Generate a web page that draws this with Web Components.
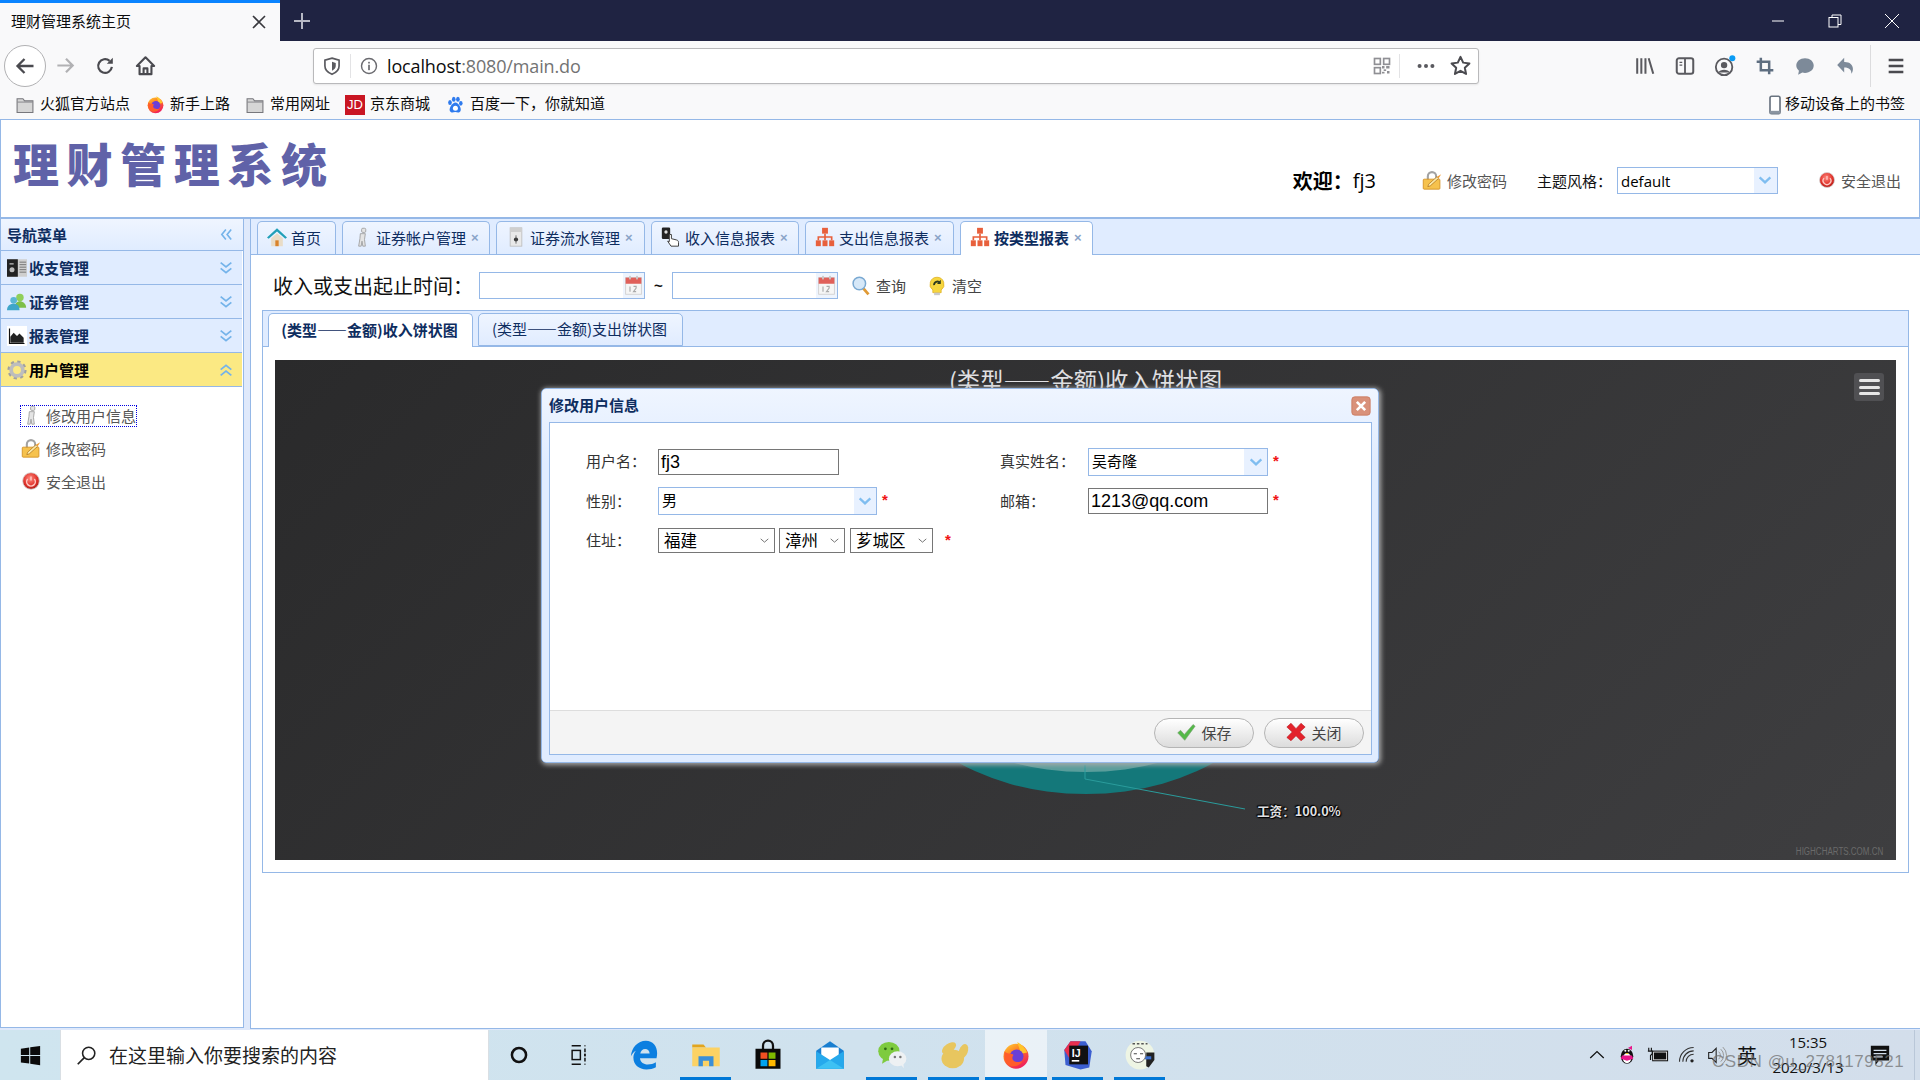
<!DOCTYPE html>
<html lang="zh">
<head>
<meta charset="utf-8">
<title>理财管理系统主页</title>
<style>
  html, body { margin: 0; padding: 0; }
  body {
    width: 1920px; height: 1080px; overflow: hidden; position: relative;
    display: flex; flex-direction: column; background: #fff;
    font-family: "Noto Sans CJK SC", "Noto Sans", sans-serif; font-size: 15px;
  }
</style>
</head>
<body>
<browser-chrome></browser-chrome>
<app-header></app-header>
<app-body>
  <side-menu>
    <menu-row icon="server">收支管理</menu-row>
    <menu-row icon="users">证券管理</menu-row>
    <menu-row icon="area">报表管理</menu-row>
    <menu-row icon="gear" open>用户管理</menu-row>
    <menu-links>
      <menu-link icon="man" focused>修改用户信息</menu-link>
      <menu-link icon="lock">修改密码</menu-link>
      <menu-link icon="power">安全退出</menu-link>
    </menu-links>
  </side-menu>
  <main-area>
    <top-tabs>
      <tab-item icon="house" w="79" plain>首页</tab-item>
      <tab-item icon="man" w="148">证券帐户管理</tab-item>
      <tab-item icon="ticket" w="149">证券流水管理</tab-item>
      <tab-item icon="hand" w="148">收入信息报表</tab-item>
      <tab-item icon="org" w="149">支出信息报表</tab-item>
      <tab-item icon="org" w="133" active>按类型报表</tab-item>
    </top-tabs>
    <filter-bar></filter-bar>
    <report-panel></report-panel>
  </main-area>
</app-body>
<user-dialog></user-dialog>
<task-bar></task-bar>

<script>
const UI_FONT = `"Noto Sans CJK SC", "Noto Sans", sans-serif`;

// all icons share a 24x24 box, drawn by hand to follow the reference
const ICONS = {
  back: `<path d="M20.5 12H5M11.5 5l-7 7 7 7" fill="none" stroke="#4a4a4f" stroke-width="2.3"/>`,
  forward: `<path d="M3.5 12H19M12.5 5l7 7-7 7" fill="none" stroke="#b1b1b3" stroke-width="2.3"/>`,
  reload: `<path d="M19.5 13a7.5 7.5 0 1 1-2.5-6.6" fill="none" stroke="#4a4a4f" stroke-width="2.4"/><path d="M20.5 3v6.5H14z" fill="#4a4a4f"/>`,
  home: `<path d="M12 3.5L3 12.5h2.8V21h12.4v-8.5H21zM10 21v-6h4v6" fill="none" stroke="#4a4a4f" stroke-width="2.2" stroke-linejoin="round"/>`,
  shield: `<path d="M12 2.5l8.5 2.5v7c0 5-3.6 8-8.5 10-4.9-2-8.5-5-8.5-10V5z" fill="none" stroke="#5a5a5f" stroke-width="2"/><path d="M12 7l4.5 1.3V12c0 2.6-1.9 4.4-4.5 5.6z" fill="#5a5a5f"/>`,
  info: `<circle cx="12" cy="12" r="9" fill="none" stroke="#6a6a6f" stroke-width="1.7"/><rect x="11" y="10.5" width="2" height="6.5" fill="#6a6a6f"/><rect x="11" y="7" width="2" height="2" fill="#6a6a6f"/>`,
  qr: `<g fill="none" stroke="#8f8f94" stroke-width="2"><rect x="3" y="3" width="7" height="7"/><rect x="14" y="3" width="7" height="7"/><rect x="3" y="14" width="7" height="7"/></g><g fill="#8f8f94"><rect x="12" y="12" width="3" height="3"/><rect x="17" y="12" width="4" height="3"/><rect x="14" y="16" width="3" height="2"/><rect x="18" y="18" width="3" height="3"/><rect x="12" y="19" width="3" height="2"/></g>`,
  dots: `<g fill="#5a5a5f"><circle cx="5" cy="12" r="2.2"/><circle cx="12" cy="12" r="2.2"/><circle cx="19" cy="12" r="2.2"/></g>`,
  star: `<path d="M12 3l2.8 6 6.5.8-4.8 4.5 1.3 6.5L12 17.5l-5.8 3.3 1.3-6.5-4.800-4.500 6.500-.8z" fill="none" stroke="#4a4a4f" stroke-width="2.1" stroke-linejoin="round"/>`,
  library: `<g stroke="#5a5a5f" stroke-width="2.2"><path d="M3.5 3.5v17M8 3.5v17M12.5 3.5v17M16 3.5l5 17"/></g>`,
  sidebar: `<rect x="3" y="3.5" width="18" height="17" rx="2.5" fill="none" stroke="#5a5a5f" stroke-width="2.2"/><path d="M12 3.5v17" stroke="#5a5a5f" stroke-width="2"/><path d="M6 8h3M6 11h3" stroke="#5a5a5f" stroke-width="1.5"/>`,
  account: `<circle cx="11" cy="13" r="9" fill="none" stroke="#5a5a5f" stroke-width="2"/><circle cx="11" cy="11" r="3.5" fill="#5a5a5f"/><path d="M5 19c1-4 11-4 12 0z" fill="#5a5a5f"/><circle cx="20" cy="3.500" r="3.300" fill="#0a9cf5"/>`,
  crop: `<path d="M7 2v15h15M2 7h15v15" fill="none" stroke="#5e6e80" stroke-width="3"/>`,
  chat: `<path d="M12 3.5c5.500 0 9.500 3.500 9.500 8s-4 8-9.500 8c-1 0-2-.1-2.900-.4L4.500 21.500l.9-4.400C3.600 15.700 2.500 13.700 2.500 11.500c0-4.500 4-8 9.500-8z" fill="#7d8a99"/>`,
  undo: `<path d="M10.5 3v5c6-.3 10 3 10 8 0 2-.6 4-1.800 5.500.3-4.500-2.700-7.300-8.200-7.200V20L2.500 11.500z" fill="#7d8a99"/>`,
  menu: `<path d="M4 5.5h16M4 12h16M4 18.500h16" stroke="#4a4a4f" stroke-width="2.6"/>`,
  folder: `<path d="M2.5 4.5h7l2 2.500h10v14h-19z" fill="#d6d6d6" stroke="#77777c" stroke-width="1.3"/><path d="M2.5 8.5h19" stroke="#8d8d92" stroke-width="1.3"/>`,
  firefox: `<defs><linearGradient id="ff" x1="0" y1="0" x2="0.6" y2="1"><stop offset="0" stop-color="#ffd63a"/><stop offset=".45" stop-color="#ff7a1f"/><stop offset="1" stop-color="#f01f5c"/></linearGradient></defs><circle cx="12" cy="13" r="10" fill="url(#ff)"/><path d="M13 1.5c3.500 2 6.500 4.500 8 8.500l-5 1z" fill="#ffc52b"/><circle cx="12.5" cy="13" r="5.5" fill="#6a3fd6"/><path d="M3 9c2 3 6 1 7 3-3 4 2 7 7 5-2 4-8 5-11 3S2 13 3 9z" fill="#ff5c2b"/>`,
  paw: `<g fill="#2f7bee"><ellipse cx="6" cy="9" rx="2.2" ry="3"/><ellipse cx="10.5" cy="5" rx="2.2" ry="3"/><ellipse cx="15.5" cy="5" rx="2.2" ry="3"/><ellipse cx="19" cy="10" rx="2.1" ry="2.8"/><path d="M12.5 9c3.500 0 8 7 6 10.500-1.500 2.500-4.500 1-6 1s-5 1.500-6.500-1C4 16 9 9 12.500 9z"/></g><circle cx="12.5" cy="16" r="3" fill="#fff"/>`,
  mobile: `<rect x="6" y="1.5" width="12" height="21" rx="2" fill="#fff" stroke="#6a7480" stroke-width="2"/><rect x="6" y="19" width="12" height="3.5" fill="#8b95a1"/>`,
  lock: `<path d="M7 12V7.5a5 5 0 0 1 10 0V12" fill="none" stroke="#a3a3a3" stroke-width="2.5"/><rect x="1.5" y="11" width="20" height="12" rx="1" fill="#f6c24d" stroke="#d18e1f"/><path d="M7 20l3-1 10-9-2-2-10 9z" fill="#fbe9a8" stroke="#a76b13" stroke-width=".8"/><path d="M18 8l5-3-3 5z" fill="#f29a2e"/>`,
  power: `<defs><radialGradient id="pw" cx=".45" cy=".35" r=".7"><stop offset="0" stop-color="#ff8a80"/><stop offset=".6" stop-color="#e0332b"/><stop offset="1" stop-color="#a81a16"/></radialGradient></defs><circle cx="12" cy="12" r="10" fill="url(#pw)" stroke="#d5d5d5"/><path d="M8 9.5a5.2 5.2 0 1 0 8 0" fill="none" stroke="#ffc7c2" stroke-width="1.8"/><path d="M12 6.5v5" stroke="#ffc7c2" stroke-width="1.8"/>`,
  man: `<g fill="#e4e4e4" stroke="#9a9a9a" stroke-width="1"><rect x="11.5" y="1.5" width="5" height="5" rx="1.5"/><path d="M10 8h6l-1 7 1 8h-3l-1-6-1 6H8l1.5-9z"/></g>`,
  server: `<rect x="0" y="1.5" width="24" height="21" fill="#cfcfcf"/><rect x="0" y="1.5" width="13" height="21" fill="#222"/><circle cx="6" cy="14" r="3" fill="#bbb"/><rect x="3" y="6" width="5" height="2" fill="#999"/><path d="M15 5h8M15 8h8M15 11h8M15 14h8M15 17h8" stroke="#777" stroke-width="1.2"/>`,
  users: `<circle cx="15.5" cy="6.5" r="4.5" fill="#8fcf5a"/><path d="M9 19c0-5 3-8 6.500-8s7.500 3 7.500 8z" fill="#7dbf4a"/><circle cx="8" cy="10" r="4" fill="#5bb6d6"/><path d="M0 22c0-5 3-8 8-8s7 3 7 8z" fill="#3fa6c9"/>`,
  area: `<rect width="24" height="24" fill="#fff"/><path d="M3 3v18h18" fill="none" stroke="#111" stroke-width="1.4"/><path d="M4 20v-7l4-5 4 4 3-3 5 5v6z" fill="#222"/>`,
  gear: `<circle cx="12" cy="12" r="9.5" fill="none" stroke="#a0a0a0" stroke-width="4" stroke-dasharray="3.7 3.76"/><circle cx="12" cy="12" r="7" fill="none" stroke="#bdbdbd" stroke-width="4.5"/><circle cx="12" cy="12" r="2.8" fill="#fbe983"/>`,
  house: `<path d="M12 1.5L0 12.500l2 1.500 10-8.500 10 8.500 2-1.500z" fill="#22a0b8"/><path d="M5 13.5l7-6 7 6V23H5z" fill="#e9dcc7"/><rect x="10" y="16" width="4" height="7" fill="#d9822b"/>`,
  ticket: `<rect x="5" y="1" width="14" height="22" fill="#e9e9e9" stroke="#bdbdbd"/><rect x="5" y="1" width="14" height="5" fill="#cfcfcf"/><circle cx="12" cy="15" r="2.5" fill="#333"/><path d="M12 10v10" stroke="#555"/>`,
  hand: `<rect x="1" y="0.5" width="10" height="14" rx="1.5" fill="#222"/><circle cx="6" cy="6" r="2" fill="#ddd"/><path d="M10 9h2.5v5l6 1.500c2 .6 2.500 1.500 2.500 3V23H12l-4-6 2 .5z" fill="#fff" stroke="#444" stroke-width="1.2"/>`,
  org: `<g fill="#e8603c"><rect x="8.5" y="1" width="7" height="7"/><rect x="1" y="16" width="6" height="7"/><rect x="9" y="16" width="6" height="7"/><rect x="17" y="16" width="6" height="7"/></g><path d="M12 8v8M4 16v-4h16v4" fill="none" stroke="#e8603c" stroke-width="2"/>`,
  calendar: `<rect x="3" y="3" width="18" height="19" fill="#f6f6f6" stroke="#d0d0d0"/><rect x="3" y="3" width="18" height="7" fill="#e0605a"/><rect x="7" y="1" width="2" height="4" fill="#c9c9c9"/><rect x="15" y="1" width="2" height="4" fill="#c9c9c9"/><path d="M8 13v6M12 13h3v2l-3 4h3" fill="none" stroke="#aaa" stroke-width="1.3"/>`,
  search: `<path d="M14 14l7 8" stroke="#e09a35" stroke-width="3.4"/><circle cx="10" cy="9" r="7.5" fill="#d6e8f8" stroke="#7aa9d2" stroke-width="1.8"/>`,
  bulb: `<path d="M12 1.5a8.500 8.500 0 0 1 5 15.300V20H7v-3.200A8.500 8.500 0 0 1 12 1.500z" fill="#f6d63e" stroke="#e0b32a"/><rect x="8.5" y="20" width="7" height="3" fill="#c9c9c9"/><path d="M8.5 11a4 4 0 0 1 7-3" fill="none" stroke="#2d3a1f" stroke-width="2.2"/><path d="M16.5 4.5v5h-4.500z" fill="#2d3a1f"/>`,
  check: `<path d="M2 13l3.5-3 4.500 5L20.500 3 23 5 10.500 22z" fill="#54b948" stroke="#7a9f76" stroke-width=".7"/>`,
  cross: `<path d="M6 1.5l6 6.500 6-6.500 5 4.500-6.500 6 6.500 6.500-5 4-6-6-6 6-5-4L7.500 12 1 6z" fill="#e3232c" stroke="#b9161d" stroke-width=".7"/>`,
  winclose: `<rect x="1" y="1" width="22" height="22" rx="3.5" fill="#d9917a" stroke="#c9785e"/><path d="M7 7l10 10M17 7L7 17" stroke="#fff" stroke-width="3.2"/>`,
  caretsmall: `<path d="M5 9l7 6 7-6" fill="none" stroke="#555" stroke-width="1.5"/>`,
  caretbig: `<path d="M4 8l8 7.5L20 8" fill="none" stroke="#7fbdf0" stroke-width="3.4"/>`,
  down2: `<path d="M4 4l8 6.5L20 4M4 12.5l8 6.500 8-6.500" fill="none" stroke="#74b3ea" stroke-width="2.6"/>`,
  up2: `<path d="M4 11.5l8-6.500 8 6.500M4 20l8-6.500 8 6.500" fill="none" stroke="#74b3ea" stroke-width="2.6"/>`,
  left2: `<path d="M11 4L4.5 12l6.500 8M19.500 4L13 12l6.500 8" fill="none" stroke="#74b3ea" stroke-width="2.6"/>`,
  win: `<path d="M1 4.2l9.5-1.300v8.600H1zM11.700 2.700L23 1v10.500H11.700zM1 12.700h9.500v8.500L1 20zM11.700 12.700H23V23l-11.300-1.600z" fill="#0b0b0b"/>`,
  lens: `<circle cx="14.5" cy="9.5" r="7" fill="none" stroke="#222" stroke-width="1.8"/><path d="M9.5 14.5L2 22" stroke="#222" stroke-width="2"/>`,
  cortana: `<circle cx="12" cy="12" r="8.5" fill="none" stroke="#111" stroke-width="3"/>`,
  taskview: `<path d="M4 2h10M4 22h10M18 2h1M18 22h1M18.500 5v4M18.500 15v4" stroke="#111" stroke-width="1.6"/><rect x="4.5" y="7" width="9" height="10" fill="none" stroke="#111" stroke-width="1.6"/><rect x="17.5" y="10.5" width="2" height="3" fill="#111"/>`,
  edge: `<path d="M22 14.5H8.8c.3 3.300 3 5 6.200 5 2.400 0 4.600-.6 6.500-1.800v4c-2.200 1.200-4.800 1.800-7.500 1.800C8 23.500 3.500 20 3.500 14c0-2 .7-4 2-5.500C4.200 9.200 2.600 10.800 1.500 13 2 6 7 .5 13.500.5c5.500 0 9 4 9 10 0 1.400-.2 2.800-.5 4zM9 10.700h7.500c0-2-1.500-3.500-3.600-3.500-2 0-3.500 1.500-3.900 3.500z" fill="#0c7fe0"/>`,
  explorer: `<path d="M1 3.5h9l2 2.500H1z" fill="#e2a51f"/><rect x="1" y="6" width="22" height="15" fill="#fcd264"/><path d="M6 21v-8h12v8h-3.500v-4.500h-5V21z" fill="#3a8fd8"/>`,
  store: `<path d="M8 8V4.5a4 4 0 0 1 8 0V8" fill="none" stroke="#111" stroke-width="1.8"/><rect x="2" y="7" width="20" height="16" fill="#0a0a0a"/><rect x="6" y="10" width="5.5" height="5" fill="#f25022"/><rect x="12.5" y="10" width="5.5" height="5" fill="#7fba00"/><rect x="6" y="16" width="5.5" height="5" fill="#00a4ef"/><rect x="12.5" y="16" width="5.5" height="5" fill="#ffb900"/>`,
  mail: `<path d="M12 1L23 8.500V23H1V8.500z" fill="#1a7fd0"/><path d="M5 6h14v7l-7 4-7-4z" fill="#fff"/><path d="M1 9l11 7 11-7v14H1z" fill="#26a9ec"/><path d="M1 23l11-7 11 7z" fill="#3ec1f3"/>`,
  wechat: `<ellipse cx="9.5" cy="9" rx="8.5" ry="7.5" fill="#7ecb3f"/><path d="M5 14l-1 5 5-3z" fill="#7ecb3f"/><circle cx="6.7" cy="7" r="1.1" fill="#2f6b14"/><circle cx="12" cy="7" r="1.1" fill="#2f6b14"/><ellipse cx="16.5" cy="15" rx="7" ry="6" fill="#eef1f3"/><path d="M19 19.5l2.500 3-.5-4.500z" fill="#eef1f3"/><circle cx="14.3" cy="13.5" r="1" fill="#777"/><circle cx="18.7" cy="13.5" r="1" fill="#777"/>`,
  navicat: `<g fill="#e8c65f"><ellipse cx="11" cy="15" rx="9" ry="7.5"/><ellipse cx="8" cy="6.5" rx="6.5" ry="3.5" transform="rotate(-35 8 6.5)"/><ellipse cx="19.5" cy="9" rx="3.5" ry="6" transform="rotate(20 19.5 9)"/></g>`,
  ij: `<path d="M6 1h12l5 8-2 13-7 1.500L2 20 1 8z" fill="#3c5fd0"/><path d="M1 8l5-7h8L6 16z" fill="#e8304f"/><rect x="5" y="4.5" width="15" height="15" fill="#111"/><text x="7" y="13.5" font-size="8.5" font-weight="700" font-family="Liberation Sans" fill="#fff">IJ</text><rect x="7" y="16" width="6" height="1.3" fill="#fff"/>`,
  avatar: `<circle cx="12" cy="12" r="11.5" fill="#eef5e4"/><path d="M17 10h6.500v6l-4.500 6-2-1z" fill="#222"/><rect x="16" y="13" width="5" height="2.5" fill="#3b6fd0"/><circle cx="10.5" cy="12" r="6" fill="#fff" stroke="#666" stroke-width=".7"/><path d="M7 11h2.500M12 11h2.500M9 15h3" stroke="#444" stroke-width=".8"/><path d="M6 3h12" stroke="#555" stroke-width="1.3" stroke-dasharray="2 1.5"/>`,
  chev: `<path d="M3 16l9-8.500 9 8.500" fill="none" stroke="#111" stroke-width="1.7"/>`,
  qq: `<ellipse cx="12" cy="13.5" rx="7.5" ry="9" fill="#111"/><ellipse cx="12" cy="16" rx="5" ry="6" fill="#fff"/><path d="M6 12.5h12l1.500 4-7.500 2.500L4.500 16.500z" fill="#e8178a"/><circle cx="10" cy="7" r="1.2" fill="#fff"/><circle cx="14" cy="7" r="1.2" fill="#fff"/><path d="M10 9.5h4l-2 1.500z" fill="#fc0"/><path d="M13 3.5l5-2.500v5z" fill="#e8178a"/>`,
  battery: `<rect x="6.5" y="7" width="17" height="11" fill="#fff" stroke="#111" stroke-width="1.2"/><rect x="8" y="8.5" width="14" height="8" fill="#111"/><path d="M2 3v4M5 3v4M1 7h5v3l-2 2v5" fill="none" stroke="#111" stroke-width="1.3"/>`,
  wifi: `<g fill="none" stroke="#333" stroke-width="1.3"><path d="M3 20A17 17 0 0 1 20 3"/><path d="M7 20A13 13 0 0 1 20 7"/><path d="M11 20a9 9 0 0 1 9-9"/></g><circle cx="18" cy="19" r="2" fill="#222"/>`,
  volume: `<path d="M2 9h4l5-5v17l-5-5H2z" fill="none" stroke="#222" stroke-width="1.3"/><path d="M14 8a6 6 0 0 1 0 9M16.500 5a10 10 0 0 1 0 15M19 2.500a13.500 13.500 0 0 1 0 20" fill="none" stroke="#999" stroke-width="1.2"/>`,
  notify: `<path d="M2 2h20v16H11l-4 5v-5H2z" fill="#111"/><path d="M5 7h14M5 10.500h14M5 14h10" stroke="#d3deeb" stroke-width="1.2"/>`,
};

// shared base: fills the open shadow root once, on connect
class Part extends HTMLElement {
  constructor() {
    super();
    this.attachShadow({ mode: "open" });
  }
  connectedCallback() {
    if (this._done) return;
    this._done = true;
    this.shadowRoot.innerHTML = `<style>${this.css()}</style>${this.html()}`;
  }
  css() { return ""; }
  html() { return "<slot></slot>"; }
}

class UiIcon extends Part {
  css() {
    const s = this.getAttribute("size") || 20;
    return `:host { display: inline-flex; width: ${s}px; height: ${s}px; flex: none; }
      svg { width: 100%; height: 100%; display: block; overflow: visible; }`;
  }
  html() {
    return `<svg viewBox="0 0 24 24">${ICONS[this.getAttribute("name")] || ""}</svg>`;
  }
}
customElements.define("ui-icon", UiIcon);

class BrowserChrome extends Part {
  css() {
    return `
      :host { display: block; height: 119px; flex: none; background: #f9f9fa; color: #0c0c0d; font-family: ${UI_FONT}; }
      .strip { height: 41px; background: #1f2342; display: flex; }
      .tab { width: 280px; box-sizing: border-box; background: #f9f9fa; border-top: 3px solid #0a84ff; display: flex; align-items: center; padding: 0 11px; font-size: 15px; justify-content: space-between; }
      .tab .ttl { margin-top: -4px; }
      .x { width: 20px; text-align: center; font-size: 0; }
      .x svg, .plus svg, .wc svg { display: block; }
      .plus { width: 44px; display: flex; align-items: center; justify-content: center; }
      .wcs { margin-left: auto; display: flex; }
      .wc { width: 57px; display: flex; align-items: center; justify-content: center; }
      .bar { height: 49px; display: flex; align-items: center; padding-left: 5px; }
      .slot { width: 40px; height: 40px; display: flex; align-items: center; justify-content: center; flex: none; }
      .round { width: 42px; height: 42px; margin-left: -1px; margin-right: -1px; box-sizing: border-box; border: 1px solid #b1b1b3; border-radius: 50%; background: #fff; }
      .url { margin-left: 148px; width: 1166px; height: 36px; box-sizing: border-box; background: #fff; border: 1px solid #b9b9bb; border-radius: 3px; display: flex; align-items: center; box-shadow: 0 1px 2px rgba(0,0,0,.08); }
      .url .shield { width: 36px; display: flex; justify-content: center; border-right: 1px solid #e3e3e5; height: 24px; align-items: center; }
      .url .i { width: 36px; display: flex; justify-content: center; }
      .addr { font: 18px "Open Sans", sans-serif; color: #737373; flex: 1; letter-spacing: -.14px; }
      .addr b { font-weight: 400; color: #0c0c0d; }
      .urlr { display: flex; align-items: center; }
      .urlr .q { width: 28px; display: flex; justify-content: center; margin-right: 3px; }
      .urlr .d { width: 1px; height: 24px; background: #e3e3e5; }
      .urlr .m { width: 35px; display: flex; justify-content: center; margin-left: 8px; }
      .urlr .s { width: 35px; display: flex; justify-content: center; }
      .tools { margin-left: 146px; display: flex; align-items: center; }
      .vsep { width: 1px; height: 42px; background: #dcdcde; margin-left: 5px; }
      .marks { height: 29px; display: flex; align-items: center; padding-left: 15px; font-size: 15px; white-space: nowrap; }
      .mk { display: flex; align-items: center; gap: 5px; margin-right: 15px; }
      .mk:first-child { margin-right: 16px; }
      .t { margin-top: -4px; }
      .jd { width: 20px; height: 20px; background: #c91623; color: #fff; font: 13px "Liberation Sans", sans-serif; display: flex; align-items: center; justify-content: center; }
      .mobile { margin-left: auto; display: flex; align-items: center; padding-right: 15px; }
    `;
  }
  html() {
    const tool = (n, s = 20) => `<span class="slot"><ui-icon name="${n}" size="${s}"></ui-icon></span>`;
    const mark = (icon, text) => `<span class="mk">${icon}<span class="t">${text}</span></span>`;
    return `
      <div class="strip">
        <div class="tab"><span class="ttl">理财管理系统主页</span>
          <span class="x"><svg width="20" height="20" viewBox="0 0 20 20"><path d="M4 4l12 12M16 4L4 16" stroke="#38383d" stroke-width="1.6"/></svg></span></div>
        <div class="plus"><svg width="18" height="18" viewBox="0 0 18 18"><path d="M9 1v16M1 9h16" stroke="#b6b8c4" stroke-width="2"/></svg></div>
        <div class="wcs">
          <div class="wc"><svg width="14" height="14" viewBox="0 0 14 14"><path d="M1 7h12" stroke="#fff"/></svg></div>
          <div class="wc"><svg width="14" height="14" viewBox="0 0 14 14"><rect x="1" y="3.5" width="9" height="9.5" fill="none" stroke="#fff"/><path d="M4 3.5V1h9v9.500h-3" fill="none" stroke="#fff"/></svg></div>
          <div class="wc"><svg width="16" height="16" viewBox="0 0 16 16"><path d="M1 1l14 14M15 1L1 15" stroke="#fff"/></svg></div>
        </div>
      </div>
      <div class="bar">
        <span class="slot"><span class="slot round"><ui-icon name="back" size="24"></ui-icon></span></span>
        ${tool("forward", 23)}${tool("reload", 22)}${tool("home", 23)}
        <div class="url">
          <span class="shield"><ui-icon name="shield" size="20"></ui-icon></span>
          <span class="i"><ui-icon name="info" size="20"></ui-icon></span>
          <span class="addr"><b>localhost</b>:8080/main.do</span>
          <span class="urlr">
            <span class="q"><ui-icon name="qr" size="20"></ui-icon></span><span class="d"></span>
            <span class="m"><ui-icon name="dots" size="22"></ui-icon></span>
            <span class="s"><ui-icon name="star" size="23"></ui-icon></span>
          </span>
        </div>
        <div class="tools">
          ${tool("library", 22)}${tool("sidebar", 22)}${tool("account", 22)}${tool("crop", 20)}${tool("chat", 22)}${tool("undo", 21)}
          <span class="vsep"></span>
          <span class="slot" style="margin-left:5px"><ui-icon name="menu" size="22"></ui-icon></span>
        </div>
      </div>
      <div class="marks">
        ${mark(`<ui-icon name="folder"></ui-icon>`, "火狐官方站点")}
        ${mark(`<ui-icon name="firefox" size="19"></ui-icon>`, "新手上路")}
        ${mark(`<ui-icon name="folder"></ui-icon>`, "常用网址")}
        ${mark(`<span class="jd">JD</span>`, "京东商城")}
        ${mark(`<ui-icon name="paw"></ui-icon>`, "百度一下，你就知道")}
        <span class="mobile"><ui-icon name="mobile" size="20"></ui-icon><span class="t">移动设备上的书签</span></span>
      </div>`;
  }
}
customElements.define("browser-chrome", BrowserChrome);

class AppHeader extends Part {
  css() {
    return `
      :host { display: flex; align-items: center; flex: none; height: 100px; box-sizing: border-box; border: 1px solid #95b8e7; border-bottom-width: 2px; background: #fff; padding-right: 18px; font-family: ${UI_FONT}; }
      .logo { font-size: 46px; font-weight: 900; letter-spacing: 7.6px; color: #6062a8; margin-left: 12px; line-height: 1; margin-top: -13px; }
      .right { margin-left: auto; display: flex; align-items: center; margin-top: 23px; }
      .hi { font-size: 20px; font-weight: 700; color: #000; display: flex; align-items: center; }
      .hi span { font: 400 20px "Open Sans", sans-serif; }
      .lnk { display: flex; align-items: center; gap: 5px; color: #555; font-size: 15px; }
      .lb { color: #111; font-size: 15px; width: 80px; margin-left: 30px; }
      .pwd { margin-left: 46px; }
      .out { margin-left: 40px; }
    `;
  }
  html() {
    return `
      <div class="logo">理财管理系统</div>
      <div class="right">
        <div class="hi">欢迎：<span>fj3</span></div>
        <div class="lnk pwd"><ui-icon name="lock"></ui-icon>修改密码</div>
        <div class="lb">主题风格：</div>
        <combo-box w="161" h="27" arrow="23" small>default</combo-box>
        <div class="lnk out"><ui-icon name="power" size="18"></ui-icon>安全退出</div>
      </div>`;
  }
}
customElements.define("app-header", AppHeader);

class ComboBox extends Part {
  css() {
    const w = this.getAttribute("w"), h = this.getAttribute("h"), a = this.getAttribute("arrow");
    const latin = this.hasAttribute("small");
    return `
      :host { display: inline-flex; width: ${w}px; height: ${h}px; box-sizing: border-box; border: 1px solid #95b8e7; background: #fff; align-items: center; flex: none; color: #000; font-size: 15px; ${latin ? `font-family: "Open Sans", sans-serif;` : ""} }
      .t { flex: 1; padding-left: 3px; margin-top: ${latin ? 1 : -3}px; }
      .a { width: ${a}px; height: 100%; background: #e8f1ff; display: flex; align-items: center; justify-content: center; }
    `;
  }
  html() {
    return `<span class="t"><slot></slot></span><span class="a"><ui-icon name="caretbig" size="16"></ui-icon></span>`;
  }
}
customElements.define("combo-box", ComboBox);

class AppBody extends Part {
  css() {
    return `:host { display: flex; flex: 1; min-height: 0; background: #dfe9fb; padding-bottom: 1px; }`;
  }
}
customElements.define("app-body", AppBody);

class SideMenu extends Part {
  css() {
    return `
      :host { display: flex; flex-direction: column; width: 244px; flex: none; box-sizing: border-box; border: 1px solid #95b8e7; border-top: 0; background: #fff; margin-right: 6px; margin-bottom: 1px; font-family: ${UI_FONT}; }
      .hd { height: 32px; box-sizing: border-box; border-bottom: 1px solid #95b8e7; background: linear-gradient(#eff5ff, #e0ecff); display: flex; align-items: center; justify-content: space-between; padding: 0 9px 0 6px; font-size: 15px; font-weight: 700; color: #0e2d5f; flex: none; }
    `;
  }
  html() {
    return `<div class="hd">导航菜单<ui-icon name="left2" size="15"></ui-icon></div><slot></slot>`;
  }
}
customElements.define("side-menu", SideMenu);

class MenuRow extends Part {
  css() {
    const on = this.hasAttribute("open");
    return `
      :host { display: flex; align-items: center; height: 34px; box-sizing: border-box; flex: none; border-bottom: 1px solid #95b8e7; background: ${on ? "#fbe983" : "#e0ecff"}; color: ${on ? "#000" : "#0e2d5f"}; font-size: 15px; font-weight: 700; padding: 0 8px 0 6px; margin-right: 1px; }
      span { margin-left: 2px; flex: 1; }
    `;
  }
  html() {
    const on = this.hasAttribute("open");
    return `<ui-icon name="${this.getAttribute("icon")}"></ui-icon><span><slot></slot></span><ui-icon name="${on ? "up2" : "down2"}" size="16"></ui-icon>`;
  }
}
customElements.define("menu-row", MenuRow);

class MenuLinks extends Part {
  css() {
    return `:host { display: flex; flex-direction: column; align-items: flex-start; gap: 11px; padding: 18px 0 0 19px; }`;
  }
}
customElements.define("menu-links", MenuLinks);

class MenuLink extends Part {
  css() {
    const f = this.hasAttribute("focused");
    return `:host { display: flex; align-items: center; gap: 5px; height: 22px; box-sizing: border-box; padding: 0 1px 2px; color: #555; font-size: 15px; ${f ? "outline: 1px dotted #0000e0; outline-offset: -1px;" : ""} }`;
  }
  html() {
    return `<ui-icon name="${this.getAttribute("icon")}"></ui-icon><slot></slot>`;
  }
}
customElements.define("menu-link", MenuLink);

class MainArea extends Part {
  css() {
    return `:host { display: flex; flex-direction: column; flex: 1; min-width: 0; background: #fff; border-left: 1px solid #95b8e7; border-bottom: 1px solid #95b8e7; font-family: ${UI_FONT}; }`;
  }
}
customElements.define("main-area", MainArea);

class TopTabs extends Part {
  css() {
    return `:host { display: flex; align-items: flex-end; gap: 6px; height: 36px; box-sizing: border-box; flex: none; padding: 2px 0 0 6px; background: #e0ecff; border-bottom: 1px solid #95b8e7; }`;
  }
}
customElements.define("top-tabs", TopTabs);

class TabItem extends Part {
  css() {
    const on = this.hasAttribute("active");
    return `
      :host { display: flex; align-items: center; gap: 4px; width: ${this.getAttribute("w")}px; height: ${on ? 34 : 33}px; margin-bottom: ${on ? -1 : 0}px; box-sizing: border-box; padding: 0 0 ${on ? 3 : 2}px 9px; border: 1px solid #95b8e7; border-bottom: 0; border-radius: 5px 5px 0 0; background: ${on ? "#fff" : "linear-gradient(#eff5ff, #e0ecff)"}; color: #0e2d5f; font-size: 15px; ${on ? "font-weight: 700;" : ""} white-space: nowrap; }
      .c { color: #8aa4c8; font: 700 13px "Liberation Sans", sans-serif; margin-left: 1px; }
    `;
  }
  html() {
    const x = this.hasAttribute("plain") ? "" : `<span class="c">×</span>`;
    return `<ui-icon name="${this.getAttribute("icon")}"></ui-icon><slot></slot>${x}`;
  }
}
customElements.define("tab-item", TabItem);

class DateBox extends Part {
  css() {
    return `
      :host { display: flex; justify-content: flex-end; width: 166px; height: 27px; box-sizing: border-box; border: 1px solid #95b8e7; background: #fff; flex: none; }
      span { width: 21px; background: #eef4fd; display: flex; align-items: center; justify-content: center; }
    `;
  }
  html() {
    return `<span><ui-icon name="calendar" size="21"></ui-icon></span>`;
  }
}
customElements.define("date-box", DateBox);

class FilterBar extends Part {
  css() {
    return `
      :host { display: flex; align-items: center; height: 55px; box-sizing: border-box; flex: none; padding: 6px 0 0 22px; color: #111; font-family: ${UI_FONT}; }
      .lb { font-size: 20px; width: 206px; white-space: nowrap; margin-top: -1px; }
      .til { width: 27px; text-align: center; font: 700 15px "Liberation Sans", sans-serif; }
      .btn { display: flex; align-items: center; gap: 5px; color: #444; font-size: 15px; }
    `;
  }
  html() {
    return `
      <span class="lb">收入或支出起止时间：</span>
      <date-box></date-box><span class="til">~</span><date-box></date-box>
      <span class="btn" style="margin-left:13px"><ui-icon name="search"></ui-icon>查询</span>
      <span class="btn" style="margin-left:21px"><ui-icon name="bulb"></ui-icon>清空</span>`;
  }
}
customElements.define("filter-bar", FilterBar);

class ReportPanel extends Part {
  css() {
    return `
      :host { display: block; margin: 0 11px 0 11px; border: 1px solid #95b8e7; font-family: ${UI_FONT}; }
      .tabs { display: flex; align-items: flex-end; gap: 5px; height: 36px; box-sizing: border-box; padding-left: 5px; background: #e0ecff; border-bottom: 1px solid #95b8e7; }
      .tb { display: flex; align-items: center; justify-content: center; height: 33px; box-sizing: border-box; padding: 0 2px 2px 0; border: 1px solid #95b8e7; border-radius: 5px 5px 0 0; color: #0e2d5f; font-size: 15px; background: linear-gradient(#eff5ff, #e0ecff); }
      .tb.on { background: #fff; border-bottom: 0; font-weight: 700; height: 34px; margin-bottom: -1px; padding-bottom: 3px; }
      .body { padding: 13px 12px 12px; background: #fff; }
    `;
  }
  html() {
    return `
      <div class="tabs">
        <div class="tb on" style="width:205px">(类型——金额)收入饼状图</div>
        <div class="tb" style="width:205px">(类型——金额)支出饼状图</div>
      </div>
      <div class="body"><pie-chart>(类型——金额)收入饼状图</pie-chart></div>`;
  }
}
customElements.define("report-panel", ReportPanel);

class PieChart extends Part {
  css() {
    return `
      :host { display: block; position: relative; height: 500px; overflow: hidden; background: linear-gradient(135deg, #2a2a2b, #3e3e40); font-family: ${UI_FONT}; }
      .title { text-align: center; color: #e0e0e3; font-size: 23.4px; line-height: 34px; padding-top: 3px; position: relative; }
      .pie { position: absolute; left: 0; top: 0; }
      .menu { position: absolute; right: 12px; top: 13px; width: 30px; height: 28px; background: #505053; border-radius: 3px; display: flex; flex-direction: column; justify-content: center; align-items: center; gap: 3.5px; }
      .menu i { display: block; width: 21px; height: 3px; border-radius: 1.5px; background: #e6e6e6; }
      .label { position: absolute; left: 982px; top: 441px; font-size: 12.6px; font-weight: 700; color: #e0e0e3; white-space: nowrap; text-shadow: 0 0 2px #000, 0 0 2px #000, 1px 1px 1px #000, -1px -1px 1px #000; }
      .credit { position: absolute; right: 13px; bottom: 3px; font: 10px "Liberation Sans", sans-serif; color: #6a6a6a; transform: scaleX(.8); transform-origin: right center; }
    `;
  }
  html() {
    return `
      <svg class="pie" width="1621" height="500">
        <ellipse cx="811" cy="298" rx="200" ry="136" fill="#14787a"/>
        <ellipse cx="811" cy="276" rx="200" ry="136" fill="#5a9e9c"/>
        <path d="M810 405v14l160 30" fill="none" stroke="#2a9c9c" stroke-width="1"/>
      </svg>
      <div class="title"><slot></slot></div>
      <div class="menu"><i></i><i></i><i></i></div>
      <div class="label">工资：100.0%</div>
      <div class="credit">HIGHCHARTS.COM.CN</div>`;
  }
}
customElements.define("pie-chart", PieChart);

class TextField extends Part {
  css() {
    return `:host { display: flex; align-items: center; width: ${this.getAttribute("w")}px; height: 26px; box-sizing: border-box; border: 1px solid #767676; padding: 1px 0 0 2px; background: #fff; color: #000; font: 18px "Liberation Sans", sans-serif; flex: none; }`;
  }
}
customElements.define("text-field", TextField);

class NativeSelect extends Part {
  css() {
    return `
      :host { display: flex; align-items: center; justify-content: space-between; width: ${this.getAttribute("w")}px; height: 25px; box-sizing: border-box; border: 1px solid #767676; padding: 0 3px 0 5px; background: #fff; color: #000; font-size: 16.5px; flex: none; line-height: 1; }
    `;
  }
  html() {
    return `<slot></slot><ui-icon name="caretsmall" size="13"></ui-icon>`;
  }
}
customElements.define("native-select", NativeSelect);

class PillButton extends Part {
  css() {
    return `:host { display: flex; align-items: center; justify-content: center; gap: 5px; width: 100px; height: 30px; box-sizing: border-box; padding-bottom: 1px; border: 1px solid #b5b5b5; border-radius: 15px; background: linear-gradient(#fff, #dcdcdc); color: #444; font-size: 15px; }`;
  }
  html() {
    return `<ui-icon name="${this.getAttribute("icon")}"></ui-icon><slot></slot>`;
  }
}
customElements.define("pill-button", PillButton);

class UserDialog extends Part {
  css() {
    return `
      :host { position: absolute; left: 541px; top: 388px; width: 838px; height: 375px; box-sizing: border-box; display: flex; flex-direction: column; padding: 0 6px 7px 7px; background: linear-gradient(#eff5ff, #e0ecff 20%); border: 1px solid #95b8e7; border-radius: 5px; box-shadow: 1px 1px 5px 1px #aaa; font-family: ${UI_FONT}; }
      .hd { height: 33px; flex: none; display: flex; align-items: center; justify-content: space-between; color: #0e2d5f; font-size: 15px; font-weight: 700; margin-right: 1px; }
      .hd span { margin-top: -2px; }
      .box { flex: 1; display: flex; flex-direction: column; border: 1px solid #95b8e7; background: #fff; }
      .form { flex: 1; display: grid; grid-template-columns: 72px 342px 88px 1fr; grid-template-rows: 39px 40px 39px; align-items: center; align-content: start; padding: 19px 0 0 36px; color: #333; font-size: 15px; }
      .form > span:not(.ctl) { margin-top: -2px; }
      .ctl { display: flex; align-items: center; }
      .star { color: #f01414; font: 700 15px "Liberation Sans", sans-serif; margin-left: 5px; margin-top: -3px; }
      .addr { grid-column: 2 / 5; gap: 4px; }
      .foot { height: 44px; flex: none; box-sizing: border-box; border-top: 1px solid #ddd; background: #f4f4f4; display: flex; align-items: center; justify-content: flex-end; gap: 10px; padding-right: 7px; }
    `;
  }
  html() {
    return `
      <div class="hd"><span>修改用户信息</span><ui-icon name="winclose" size="20"></ui-icon></div>
      <div class="box">
        <div class="form">
          <span>用户名：</span><span class="ctl"><text-field w="181">fj3</text-field></span>
          <span>真实姓名：</span><span class="ctl"><combo-box w="180" h="28" arrow="23">吴奇隆</combo-box><b class="star">*</b></span>
          <span>性别：</span><span class="ctl"><combo-box w="219" h="28" arrow="22">男</combo-box><b class="star">*</b></span>
          <span>邮箱：</span><span class="ctl"><text-field w="180">1213@qq.com</text-field><b class="star">*</b></span>
          <span>住址：</span><span class="ctl addr"><native-select w="117">福建</native-select><native-select w="66">漳州</native-select><native-select w="83" style="margin-left:1px">芗城区</native-select><b class="star" style="margin-left:8px">*</b></span>
        </div>
        <div class="foot">
          <pill-button icon="check">保存</pill-button>
          <pill-button icon="cross">关闭</pill-button>
        </div>
      </div>`;
  }
}
customElements.define("user-dialog", UserDialog);

class TaskBar extends Part {
  css() {
    return `
      :host { display: flex; height: 50px; flex: none; position: relative; background: linear-gradient(90deg, #cfe5ef, #d0e2ee 45%, #d3deeb); color: #111; font-family: ${UI_FONT}; }
      .start { width: 60px; display: flex; align-items: center; justify-content: center; }
      .find { width: 429px; box-sizing: border-box; background: #fff; border: 1px solid #d9dfe4; border-width: 0 1px; display: flex; align-items: center; padding: 0 0 0 15px; gap: 12px; font-size: 19px; color: #222; }
      .find span { margin-top: -2px; }
      .sys { width: 60px; display: flex; align-items: center; justify-content: center; }
      .apps { display: flex; margin-left: 4px; }
      .app { width: 62px; display: flex; align-items: center; justify-content: center; position: relative; }
      .app.run::after { content: ""; position: absolute; left: 5px; right: 6px; bottom: 0; height: 3px; background: #0078d7; }
      .app.on { background: rgba(255,255,255,.55); }
      .app.on::after { left: 0; right: 0; }
      .tray { margin-left: auto; display: flex; align-items: center; margin-right: 12px; }
      .tr { width: 30px; display: flex; justify-content: center; }
      .ime { font-size: 20px; }
      .clock { width: 88px; text-align: center; font: 15px/25px "Open Sans", sans-serif; color: #111; margin-left: 2px; }
      .note { width: 56px; display: flex; justify-content: center; }
      .desk { position: absolute; right: 5px; top: 0; bottom: 0; width: 1px; background: #b9c7d8; }
      .mark { position: absolute; left: 1712px; top: 22px; font: 17px "Liberation Sans", sans-serif; letter-spacing: .55px; color: rgba(110,110,110,.72); white-space: nowrap; }
    `;
  }
  html() {
    const app = (n, cls = "") => `<span class="app ${cls}"><ui-icon name="${n}" size="30"></ui-icon></span>`;
    return `
      <div class="start"><ui-icon name="win" size="21"></ui-icon></div>
      <div class="find"><ui-icon name="lens" size="21"></ui-icon><span>在这里输入你要搜索的内容</span></div>
      <div class="sys"><ui-icon name="cortana" size="20"></ui-icon></div>
      <div class="sys"><ui-icon name="taskview" size="22"></ui-icon></div>
      <div class="apps">
        ${app("edge")}${app("explorer", "run")}${app("store")}${app("mail")}${app("wechat", "run")}${app("navicat", "run")}${app("firefox", "run on")}${app("ij", "run")}${app("avatar", "run")}
      </div>
      <div class="tray">
        <span class="tr"><ui-icon name="chev" size="18"></ui-icon></span>
        <span class="tr"><ui-icon name="qq" size="20"></ui-icon></span>
        <span class="tr"><ui-icon name="battery" size="21"></ui-icon></span>
        <span class="tr"><ui-icon name="wifi" size="20"></ui-icon></span>
        <span class="tr"><ui-icon name="volume" size="20"></ui-icon></span>
        <span class="tr ime">英</span>
        <div class="clock">15:35<br>2020/3/13</div>
        <span class="note"><ui-icon name="notify" size="22"></ui-icon></span>
      </div>
      <span class="desk"></span>
      <span class="mark">CSDN @u_2781179521</span>`;
  }
}
customElements.define("task-bar", TaskBar);
</script>
</body>
</html>
